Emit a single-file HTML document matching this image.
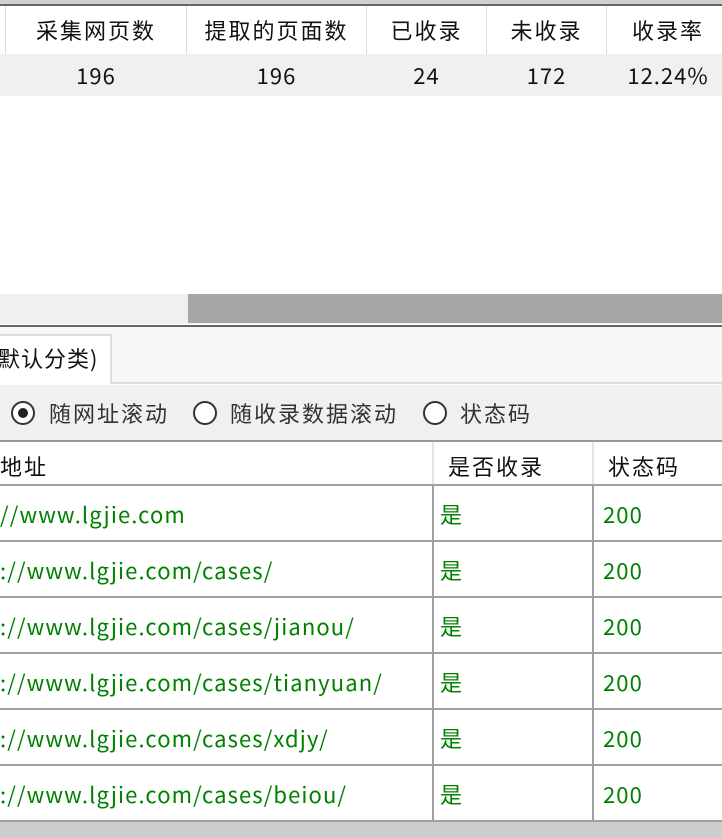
<!DOCTYPE html>
<html><head><meta charset="utf-8"><style>
*{margin:0;padding:0;box-sizing:border-box}
body{width:722px;height:838px;overflow:hidden;background:#fff;font-family:"Noto Sans CJK SC","Liberation Sans",sans-serif;font-size:22px;line-height:26px;color:#111;position:relative}
.a{position:absolute;white-space:nowrap}
.z{letter-spacing:2px}
.n{letter-spacing:1px}
.c{position:absolute;text-align:center;white-space:nowrap}
.g{color:#008000;letter-spacing:1.1px}
.vl{position:absolute;width:2px;background:#a0a0a0}
.hl{position:absolute;left:0;width:722px;height:2px;background:#a0a0a0}
.radio{position:absolute;width:24px;height:24px;border:2px solid #333;border-radius:50%;background:#fff}
</style></head><body>
<div class="a" style="left:0;top:0;width:722px;height:4px;background:#d0d0d0"></div>
<div class="a" style="left:0;top:4px;width:722px;height:2px;background:#666"></div>
<div class="a" style="left:5px;top:6px;width:1px;height:48px;background:#ddd"></div>
<div class="a" style="left:186px;top:6px;width:1px;height:48px;background:#ddd"></div>
<div class="a" style="left:366px;top:6px;width:1px;height:48px;background:#ddd"></div>
<div class="a" style="left:486px;top:6px;width:1px;height:48px;background:#ddd"></div>
<div class="a" style="left:606px;top:6px;width:1px;height:48px;background:#ddd"></div>
<div class="c z" style="left:6px;width:180px;top:17px">采集网页数</div>
<div class="c z" style="left:187px;width:179px;top:17px">提取的页面数</div>
<div class="c z" style="left:367px;width:119px;top:17px">已收录</div>
<div class="c z" style="left:487px;width:119px;top:17px">未收录</div>
<div class="c z" style="left:607px;width:122px;top:17px">收录率</div>
<div class="a" style="left:0;top:54px;width:722px;height:42px;background:#f0f0f0"></div>
<div class="c n" style="left:6px;width:180px;top:62px">196</div>
<div class="c n" style="left:187px;width:179px;top:62px">196</div>
<div class="c n" style="left:367px;width:119px;top:62px">24</div>
<div class="c n" style="left:487px;width:119px;top:62px">172</div>
<div class="c n" style="left:607px;width:122px;top:62px">12.24%</div>
<div class="a" style="left:0;top:294px;width:722px;height:30px;background:#f0f0f0"></div>
<div class="a" style="left:188px;top:294px;width:534px;height:29px;background:#a6a6a6"></div>
<div class="a" style="left:0;top:325px;width:722px;height:2px;background:#666"></div>
<div class="a" style="left:0;top:327px;width:722px;height:57px;background:#f7f7f7;border-bottom:2px solid #ddd"></div>
<div class="a" style="left:0;top:334px;width:112px;height:50px;background:#fff;border-top:2px solid #ddd;border-right:2px solid #ddd"></div>
<div class="a" style="left:-2px;top:345px;letter-spacing:1px">默认分类)</div>
<div class="a" style="left:0;top:385px;width:722px;height:55px;background:#f0f0f0"></div>
<div class="radio" style="left:11px;top:401px"></div>
<div class="a" style="left:18px;top:408px;width:10px;height:10px;border-radius:50%;background:#222"></div>
<div class="a z" style="left:49px;top:400px;color:#333">随网址滚动</div>
<div class="radio" style="left:193px;top:401px"></div>
<div class="a z" style="left:230px;top:400px;color:#333">随收录数据滚动</div>
<div class="radio" style="left:423px;top:401px"></div>
<div class="a z" style="left:460px;top:400px;color:#333">状态码</div>
<div class="a" style="left:0;top:440px;width:722px;height:2px;background:#999"></div>
<div class="a" style="left:432px;top:442px;width:2px;height:43px;background:#e4e4e4"></div>
<div class="a" style="left:592px;top:442px;width:2px;height:43px;background:#e4e4e4"></div>
<div class="a z" style="left:0;top:453px">地址</div>
<div class="a z" style="left:448px;top:453px">是否收录</div>
<div class="a z" style="left:608px;top:453px">状态码</div>
<div class="hl" style="top:484px"></div>
<div class="vl" style="left:432px;top:486px;height:336px"></div>
<div class="vl" style="left:592px;top:486px;height:336px"></div>
<div class="hl" style="top:540px"></div>
<div class="hl" style="top:596px"></div>
<div class="hl" style="top:652px"></div>
<div class="hl" style="top:708px"></div>
<div class="hl" style="top:764px"></div>
<div class="hl" style="top:820px"></div>
<div class="a g" style="left:0;top:501px">//www.lgjie.com</div>
<div class="a g" style="left:0;top:557px">://www.lgjie.com/cases/</div>
<div class="a g" style="left:0;top:613px">://www.lgjie.com/cases/jianou/</div>
<div class="a g" style="left:0;top:669px">://www.lgjie.com/cases/tianyuan/</div>
<div class="a g" style="left:0;top:725px">://www.lgjie.com/cases/xdjy/</div>
<div class="a g" style="left:0;top:781px">://www.lgjie.com/cases/beiou/</div>
<div class="a g" style="left:440px;top:501px">是</div><div class="a g" style="left:603px;top:501px">200</div>
<div class="a g" style="left:440px;top:557px">是</div><div class="a g" style="left:603px;top:557px">200</div>
<div class="a g" style="left:440px;top:613px">是</div><div class="a g" style="left:603px;top:613px">200</div>
<div class="a g" style="left:440px;top:669px">是</div><div class="a g" style="left:603px;top:669px">200</div>
<div class="a g" style="left:440px;top:725px">是</div><div class="a g" style="left:603px;top:725px">200</div>
<div class="a g" style="left:440px;top:781px">是</div><div class="a g" style="left:603px;top:781px">200</div>
<div class="a" style="left:0;top:822px;width:722px;height:16px;background:#cdcdcd"></div>
</body></html>
